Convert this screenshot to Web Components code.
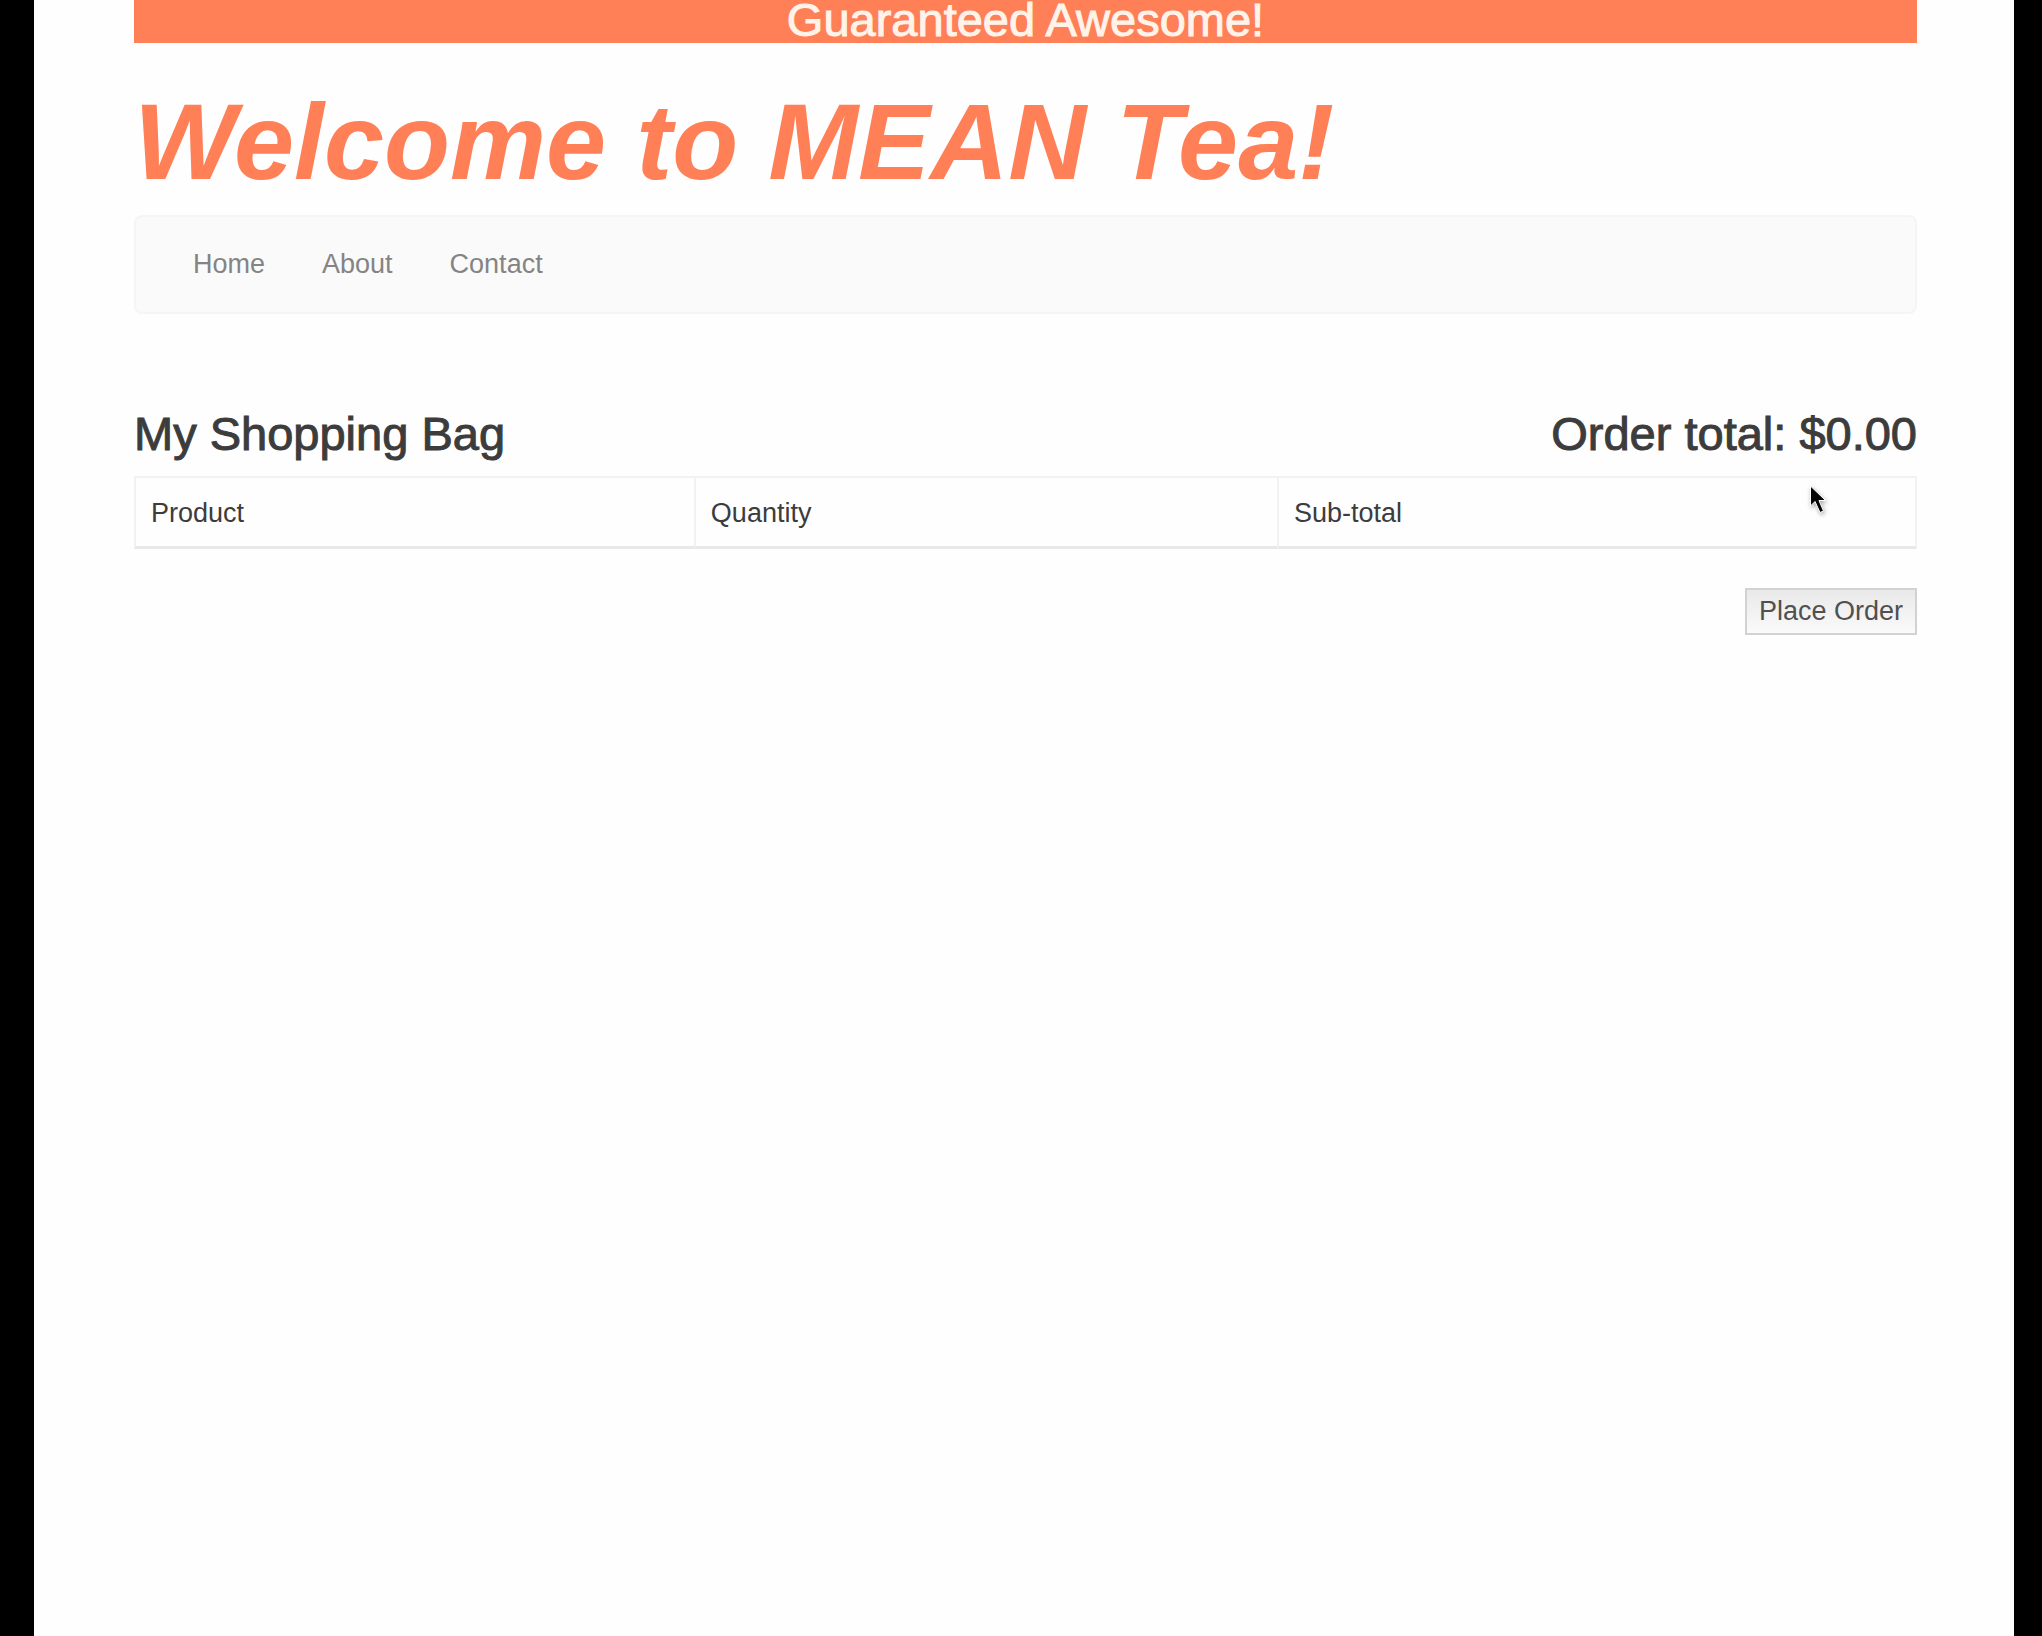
<!DOCTYPE html>
<html lang="en">
<head>
<meta charset="utf-8">
<title>MEAN Tea</title>
<style>
  body { margin: 0; background: #000; color: #3c3c3c; font: 27px/40px "Liberation Sans", Arial, sans-serif; }
</style>
</head>
<body>
<tea-page>
  <tea-header>Guaranteed Awesome!<span slot="title">Welcome to MEAN Tea!</span></tea-header>
  <tea-nav></tea-nav>
  <tea-bag></tea-bag>
</tea-page>
<script>
const define = (name, html) => customElements.define(name, class extends HTMLElement {
  constructor() {
    super();
    this.attachShadow({ mode: "open" }).innerHTML = html;
  }
});

define("tea-page", `
<style>
  :host { display: block; box-sizing: border-box; min-height: 100vh; margin: 0 28px 0 34px; padding: 0 97px 0 100px; background: #fefefe; }
</style>
<slot></slot>`);

define("tea-header", `
<style>
  :host { display: block; }
  p { margin: 0 0 39px; padding-bottom: 3px; background: #ff7f57; color: #fff3ea; font-size: 47px; line-height: 40px; text-align: center; -webkit-text-stroke: 1px; }
  h1 { margin: 0 0 14px; color: #ff7f57; font-size: 108px; line-height: 119px; font-weight: bold; font-style: italic; }
</style>
<p><slot></slot></p>
<h1><slot name="title"></slot></h1>`);

define("tea-nav", `
<style>
  :host { display: block; margin-bottom: 94px; }
  nav { border: 2px solid #f5f5f5; border-radius: 8px; background: #fafafa; }
  ul { display: flex; flex-wrap: wrap; gap: 57px; margin: 0; padding: 28px 57px; list-style: none; line-height: 39px; }
  a { color: #848484; text-decoration: none; }
</style>
<nav><ul>
  <li><a href="#home">Home</a></li>
  <li><a href="#about">About</a></li>
  <li><a href="#contact">Contact</a></li>
</ul></nav>`);

define("tea-bag", `
<style>
  :host { display: block; }
  .head { display: flex; justify-content: space-between; margin-bottom: 16px; }
  h2 { margin: 0; font-size: 47px; line-height: 52px; font-weight: normal; -webkit-text-stroke: 1px; }
  .items { position: relative; margin-bottom: 39px; }
  table { width: 100%; table-layout: fixed; border-collapse: separate; border-spacing: 0; }
  th { box-sizing: border-box; padding: 15px 15px 13px; border: solid #f2f2f2; border-width: 2px 0 3px 2px; border-bottom-color: #e8e8e8; font-weight: normal; text-align: left; }
  th:last-child { border-right-width: 2px; }
  .product { width: 31.4%; }
  .quantity { width: 32.7%; }
  .actions { display: flex; justify-content: flex-end; }
  button { margin: 0; padding: 0 12px; border: 2px solid #d2d2d2; border-radius: 0; background: linear-gradient(#e9e9e9, #fafafa); color: #505050; font: 27px/43px "Liberation Sans", Arial, sans-serif; }
  svg { position: absolute; right: 88px; top: 9px; overflow: visible; filter: drop-shadow(1px 2px 2px #0005); }
</style>
<div class="head"><h2>My Shopping Bag</h2><h2>Order total: $0.00</h2></div>
<div class="items">
  <table>
    <thead><tr><th scope="col" class="product">Product</th><th scope="col" class="quantity">Quantity</th><th scope="col">Sub-total</th></tr></thead>
  </table>
  <svg width="20" height="30" viewBox="0 0 20 30" aria-hidden="true"><path d="M1.500 1V21L6 16.500L11 27.500L14.500 26L10 15.500H16.500Z" fill="#050505" stroke="#fff" stroke-width="1" stroke-linejoin="round"/></svg>
</div>
<div class="actions"><button type="button">Place Order</button></div>`);
</script>
</body>
</html>
